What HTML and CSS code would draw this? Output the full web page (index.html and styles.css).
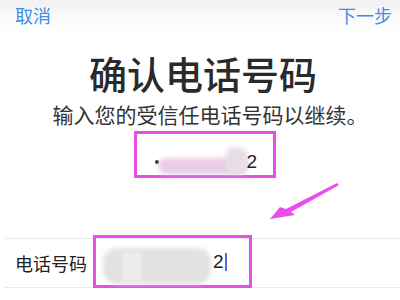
FILE: index.html
```html
<!DOCTYPE html>
<html lang="zh">
<head>
<meta charset="utf-8">
<link rel="stylesheet" href="styles.css">
</head>
<body>
<div class="page">
  <header class="nav">
    <span class="nav-btn">取消</span>
    <span class="nav-btn">下一步</span>
  </header>
  <h1 class="title">确认电话号码</h1>
  <p class="subtitle">输入您的受信任电话号码以继续。</p>
  <div class="mark-box top-box">
    <span class="dot"></span>
    <span class="blob pink"></span>
    <span class="blob gray-sq"></span>
    <span class="digit">2</span>
  </div>
  <svg class="arrow" width="80" height="45" viewBox="0 0 80 45">
    <polygon points="5,39 15,27 21,29 72,3 74,5 26,32 30,35" fill="#ec4cea"/>
  </svg>
  <div class="row">
    <span class="label">电话号码</span>
    <div class="mark-box input-box">
      <span class="blob gray"></span>
      <span class="blob gray-light"></span>
      <span class="digit">2</span>
      <span class="cursor"></span>
    </div>
  </div>
</div>
</body>
</html>
```
FILE: styles.css
```css
html, body {
  margin: 0;
  padding: 0;
  background: #fff;
}
.page {
  position: relative;
  width: 400px;
  height: 300px;
  overflow: hidden;
  font-family: "Noto Sans CJK SC", "Noto Sans", sans-serif;
  color: #222;
}
.nav {
  display: flex;
  justify-content: space-between;
  align-items: center;
  height: 30px;
  padding: 0 8px 0 15px;
  background: linear-gradient(#f2f2f2, #fff);
}
.nav-btn {
  font-size: 18px;
  line-height: 30px;
  color: #3f8de6;
}
.title {
  margin: 21px 0 0;
  padding-left: 6px;
  text-align: center;
  font-size: 38px;
  line-height: 44px;
  font-weight: 500;
  color: #2a2a2a;
}
.subtitle {
  margin: 8px 0 0;
  padding-left: 20px;
  text-align: center;
  font-size: 21px;
  line-height: 22px;
  color: #333;
}
.mark-box {
  box-sizing: border-box;
  border: 3px solid #e64fe4;
}
.top-box {
  position: relative;
  width: 142px;
  height: 47px;
  margin: 6px 0 0 134px;
  display: flex;
  justify-content: flex-end;
  padding: 18px 16px 0 0;
}
.digit {
  position: relative;
  font-size: 19px;
  line-height: 20px;
  color: #222;
  font-family: "Liberation Sans", "Noto Sans", sans-serif;
}
.dot {
  position: absolute;
  left: 18px;
  top: 26px;
  width: 4px;
  height: 4px;
  border-radius: 50%;
  background: #222;
}
.blob {
  position: absolute;
  filter: blur(2px);
}
.pink {
  left: 21px;
  top: 24px;
  width: 90px;
  height: 16px;
  border-radius: 8px;
  background: #e9cde8;
}
.gray-sq {
  left: 89px;
  top: 13px;
  width: 22px;
  height: 26px;
  border-radius: 6px 10px 10px 6px;
  background: #e6e0e6;
}
.arrow {
  position: absolute;
  left: 265px;
  top: 180px;
}
.row {
  position: relative;
  margin: 60px 0 0 4px;
  height: 48px;
  border-top: 1px solid #ebebeb;
  border-bottom: 1px solid #ebebeb;
  display: flex;
  align-items: center;
  padding-left: 11px;
}
.label {
  font-size: 18px;
  line-height: 24px;
  color: #222;
}
.input-box {
  position: absolute;
  left: 89px;
  top: -4px;
  width: 159px;
  height: 53px;
  display: flex;
  align-items: center;
  padding-left: 117px;
}
.gray {
  left: 7px;
  top: 10px;
  width: 108px;
  height: 36px;
  border-radius: 14px;
  background: #e2e2e2;
}
.gray-light {
  left: 26px;
  top: 14px;
  width: 20px;
  height: 30px;
  background: #ececec;
}
.cursor {
  width: 2px;
  height: 18px;
  background: #4a72d6;
  margin-left: 1px;
}
```
